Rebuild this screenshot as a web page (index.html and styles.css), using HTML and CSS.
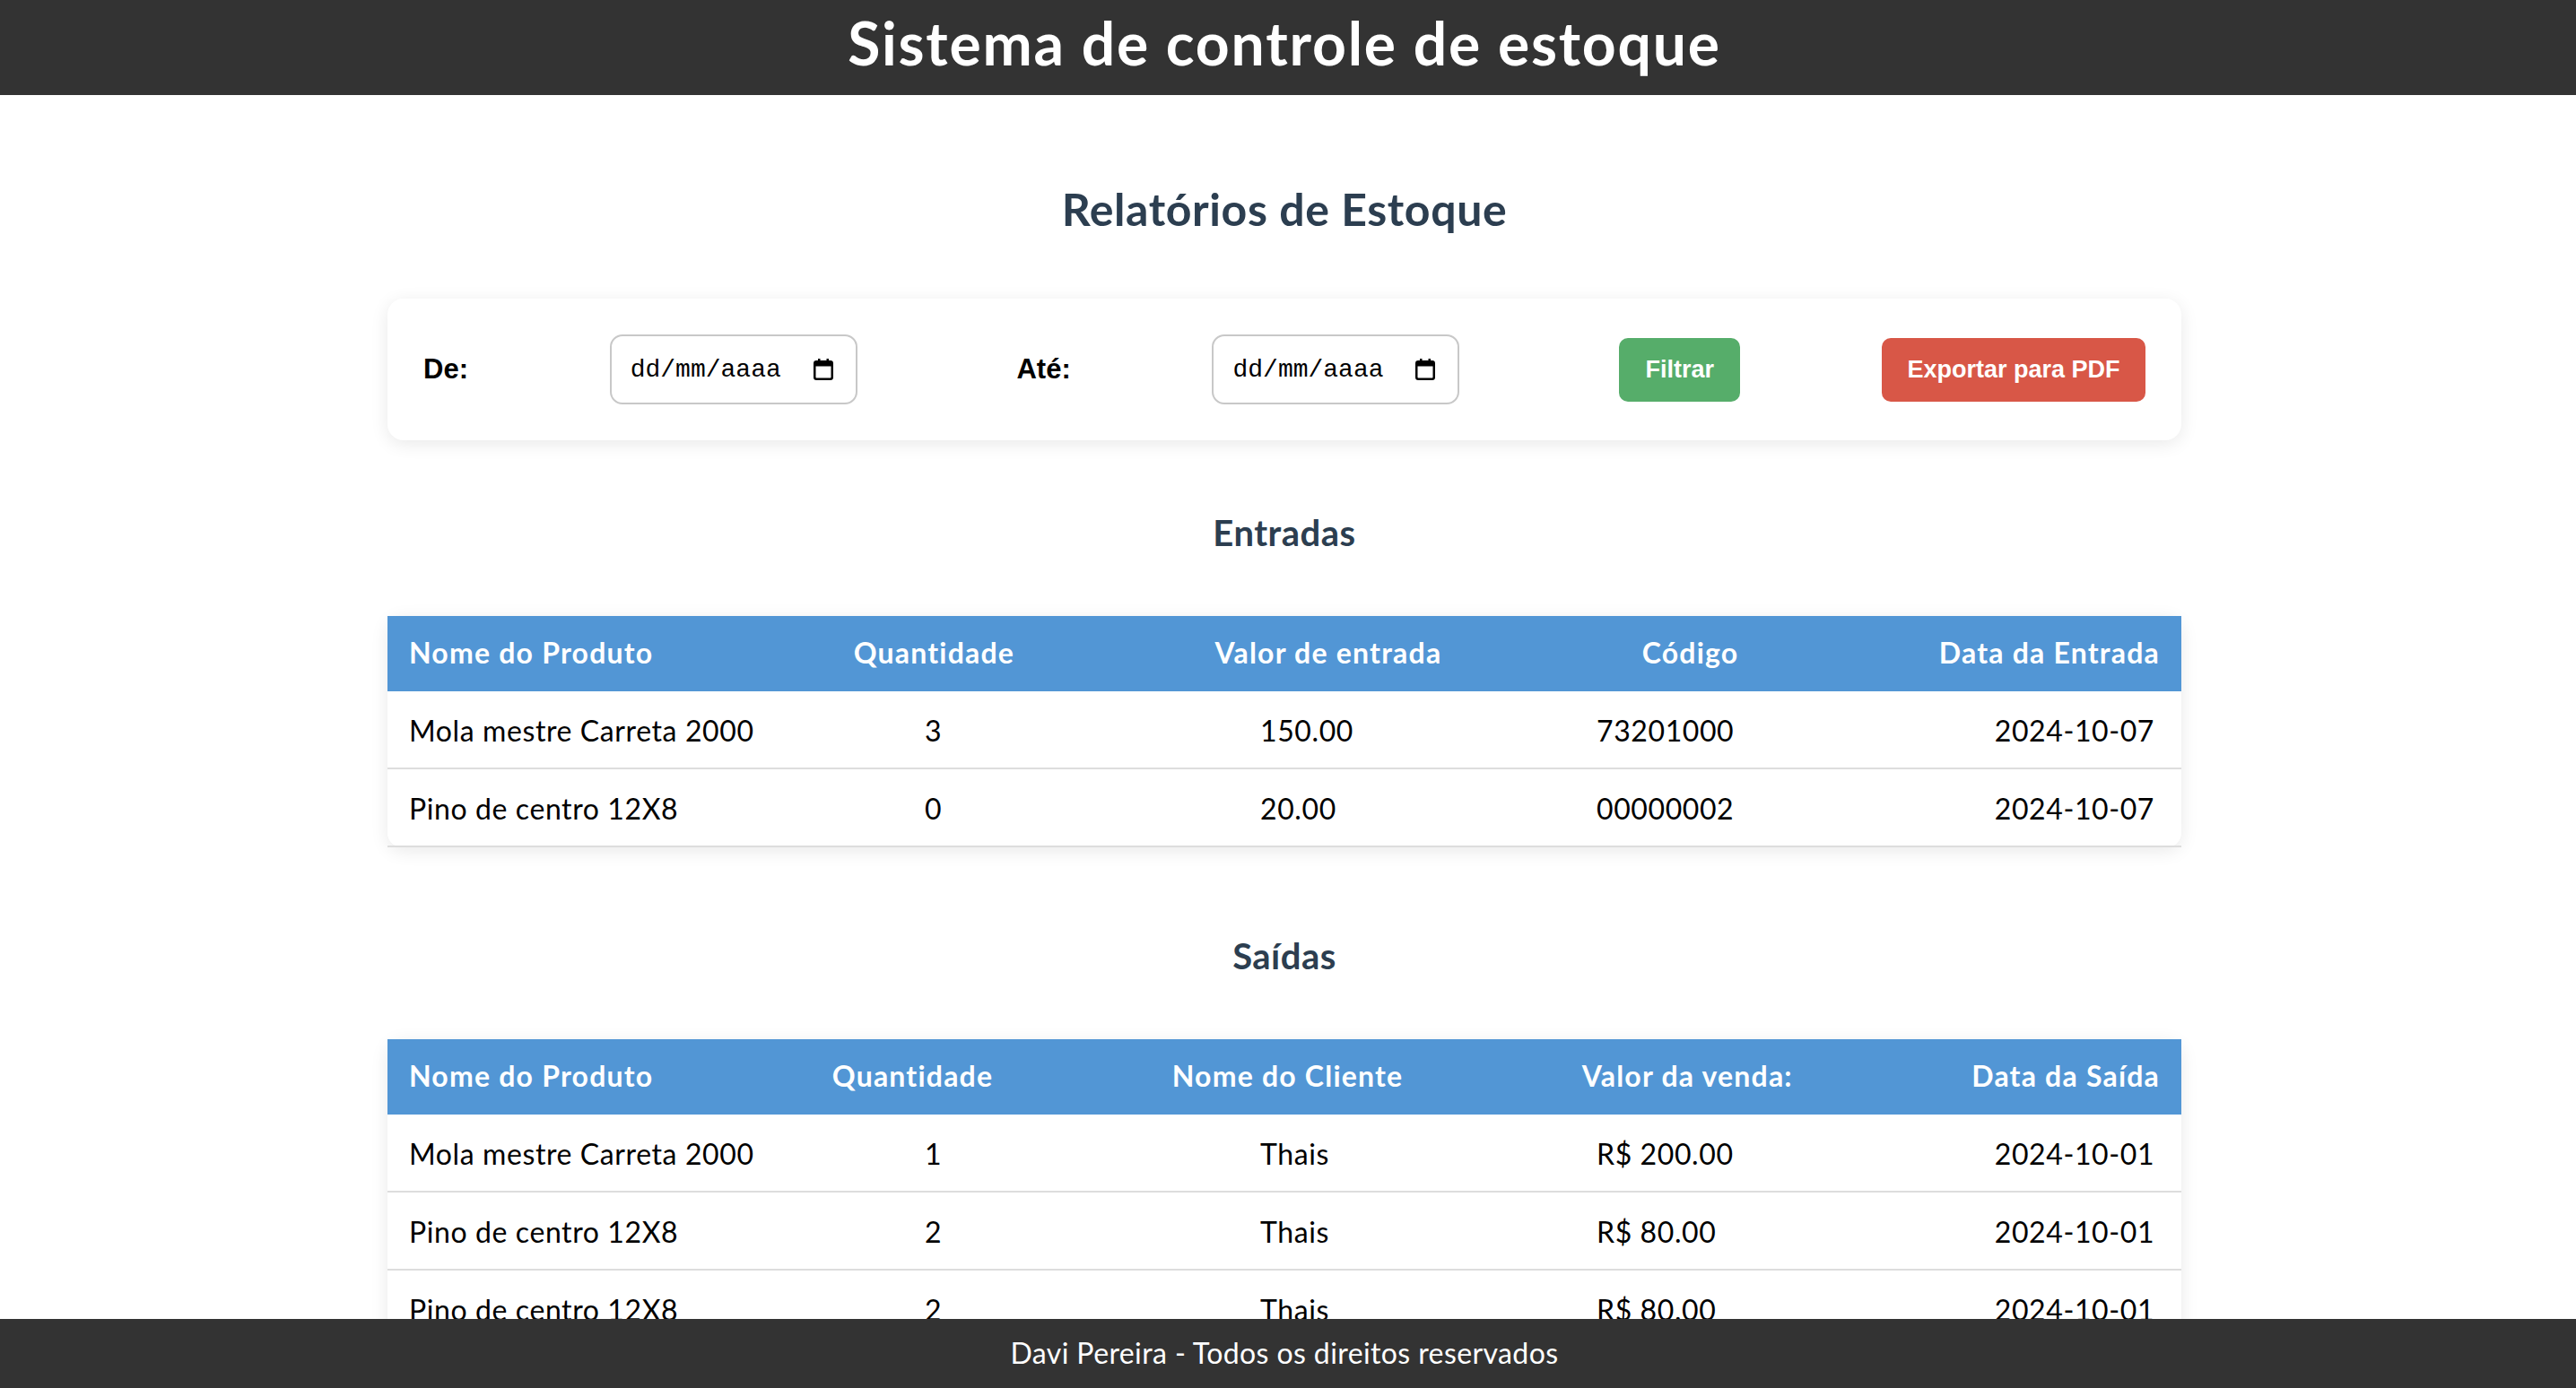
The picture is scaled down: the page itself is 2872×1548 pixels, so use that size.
FILE: index.html
```html
<!DOCTYPE html>
<html lang="pt-BR">
<head>
<meta charset="utf-8">
<title>Sistema de controle de estoque</title>
<link rel="stylesheet" href="styles.css">
</head>
<body>
<header class="site-header">
  <h1 class="site-title">Sistema de controle de estoque</h1>
</header>

<main class="container">
  <h2 class="page-title">Relatórios de Estoque</h2>

  <form class="filter-card">
    <label class="filter-label">De:</label>
    <div class="date-field">
      <span class="date-text">dd/mm/aaaa</span>
      <svg class="cal-icon" width="22" height="24" viewBox="0 0 22 24"><rect x="5" y="0" width="2.5" height="4" fill="#000"/><rect x="14.5" y="0" width="2.5" height="4" fill="#000"/><rect x="1.25" y="3.25" width="19.5" height="19.5" rx="2" fill="none" stroke="#000" stroke-width="2.5"/><rect x="1" y="3" width="20" height="5.5" fill="#000"/></svg>
    </div>
    <label class="filter-label">Até:</label>
    <div class="date-field">
      <span class="date-text">dd/mm/aaaa</span>
      <svg class="cal-icon" width="22" height="24" viewBox="0 0 22 24"><rect x="5" y="0" width="2.5" height="4" fill="#000"/><rect x="14.5" y="0" width="2.5" height="4" fill="#000"/><rect x="1.25" y="3.25" width="19.5" height="19.5" rx="2" fill="none" stroke="#000" stroke-width="2.5"/><rect x="1" y="3" width="20" height="5.5" fill="#000"/></svg>
    </div>
    <button type="button" class="btn btn-filter">Filtrar</button>
    <button type="button" class="btn btn-export">Exportar para PDF</button>
  </form>

  <section class="report report-in">
    <h3 class="report-title">Entradas</h3>
    <div class="table-card">
      <table class="report-table">
        <colgroup><col class="c1"><col class="c2"><col class="c3"><col class="c4"><col class="c5"></colgroup>
        <thead>
          <tr><th colspan="5"><div class="head-row"><span>Nome do Produto</span><span>Quantidade</span><span>Valor de entrada</span><span>Código</span><span>Data da Entrada</span></div></th></tr>
        </thead>
        <tbody>
          <tr><td>Mola mestre Carreta 2000</td><td>3</td><td>150.00</td><td>73201000</td><td>2024-10-07</td></tr>
          <tr><td>Pino de centro 12X8</td><td>0</td><td>20.00</td><td>00000002</td><td>2024-10-07</td></tr>
        </tbody>
      </table>
    </div>
  </section>

  <section class="report report-out">
    <h3 class="report-title">Saídas</h3>
    <div class="table-card">
      <table class="report-table">
        <colgroup><col class="c1"><col class="c2"><col class="c3"><col class="c4"><col class="c5"></colgroup>
        <thead>
          <tr><th colspan="5"><div class="head-row"><span>Nome do Produto</span><span>Quantidade</span><span>Nome do Cliente</span><span>Valor da venda:</span><span>Data da Saída</span></div></th></tr>
        </thead>
        <tbody>
          <tr><td>Mola mestre Carreta 2000</td><td>1</td><td>Thais</td><td>R$ 200.00</td><td>2024-10-01</td></tr>
          <tr><td>Pino de centro 12X8</td><td>2</td><td>Thais</td><td>R$ 80.00</td><td>2024-10-01</td></tr>
          <tr><td>Pino de centro 12X8</td><td>2</td><td>Thais</td><td>R$ 80.00</td><td>2024-10-01</td></tr>
        </tbody>
      </table>
    </div>
  </section>
</main>

<footer class="site-footer">Davi Pereira - Todos os direitos reservados</footer>
</body>
</html>
```

FILE: styles.css
```css
* { box-sizing: border-box; }

html, body {
  margin: 0;
  padding: 0;
  background: #fff;
}

body {
  font-family: Lato, "Open Sans", Arial, sans-serif;
  color: #000;
  padding-bottom: 120px;
}

.site-header {
  background: #333;
  height: 106px;
  padding: 8px 8px 0 0;
}

.site-title {
  margin: 0;
  text-align: center;
  color: #fff;
  font-size: 66px;
  line-height: 1.2;
  font-weight: 700;
  letter-spacing: 1.8px;
}

.container {
  width: 2008px;
  margin: 0 auto;
  padding-right: 8px;
}

.page-title {
  margin: 97px 0 70px;
  text-align: center;
  color: #2c3e50;
  font-size: 50px;
  line-height: 1.2;
  font-weight: 700;
  letter-spacing: 0.6px;
}

.filter-card {
  display: flex;
  align-items: center;
  justify-content: space-between;
  background: #fff;
  border-radius: 18px;
  box-shadow: 0 4px 20px rgba(0, 0, 0, 0.09);
  padding: 40px;
}

.filter-label {
  font-family: "Liberation Sans", Arial, sans-serif;
  font-weight: 700;
  font-size: 31px;
  color: #000;
}

.date-field {
  width: 276px;
  height: 78px;
  margin-right: 20px;
  border: 2px solid #c8c8c8;
  border-radius: 14px;
  display: flex;
  align-items: center;
  justify-content: space-between;
  padding: 0 25px 0 21px;
}

.date-text {
  font-family: "Liberation Mono", "DejaVu Sans Mono", monospace;
  font-size: 28px;
  color: #000;
}

.cal-icon { display: block; }

.btn {
  height: 71px;
  border: 0;
  border-radius: 10px;
  color: #fff;
  font-family: "Liberation Sans", Arial, sans-serif;
  font-weight: 700;
  font-size: 27px;
  padding: 0;
}

.btn-filter {
  width: 135px;
  background: #56ad6a;
}

.btn-export {
  width: 294px;
  background: #d85747;
}

.report-title {
  margin: 0 0 69px;
  text-align: center;
  color: #2c3e50;
  font-size: 40px;
  line-height: 48px;
  font-weight: 700;
  letter-spacing: 0.5px;
}

.report-in { margin-top: 79px; }
.report-out { margin-top: 97px; }

.table-card {
  background: #fff;
  border-radius: 16px;
  box-shadow: 0 4px 20px rgba(0, 0, 0, 0.09);
}

.report-table {
  width: 2000px;
  border-collapse: collapse;
  table-layout: fixed;
  font-size: 32px;
  line-height: 37px;
  letter-spacing: 0.6px;
}

.c1 { width: 575px; }
.c2 { width: 374px; }
.c3 { width: 375px; }
.c4 { width: 405px; }
.c5 { width: 271px; }

.report-table th {
  background: #5296d5;
  color: #fff;
  font-weight: 700;
  text-align: left;
  padding: 22px 24px 25px;
}

.head-row {
  display: flex;
  justify-content: space-between;
  letter-spacing: 1.2px;
}

.report-table td {
  padding: 25px 24px 23px;
  text-align: left;
  border-bottom: 2px solid #ddd;
  white-space: nowrap;
}

.report-table td:last-child {
  text-align: right;
  padding-right: 30px;
}

.site-footer {
  position: fixed;
  left: 0;
  right: 0;
  bottom: 0;
  height: 77px;
  background: #333;
  color: #fff;
  text-align: center;
  font-size: 32px;
  line-height: 37px;
  padding: 19px 8px 0 0;
  letter-spacing: 0.4px;
}
```
